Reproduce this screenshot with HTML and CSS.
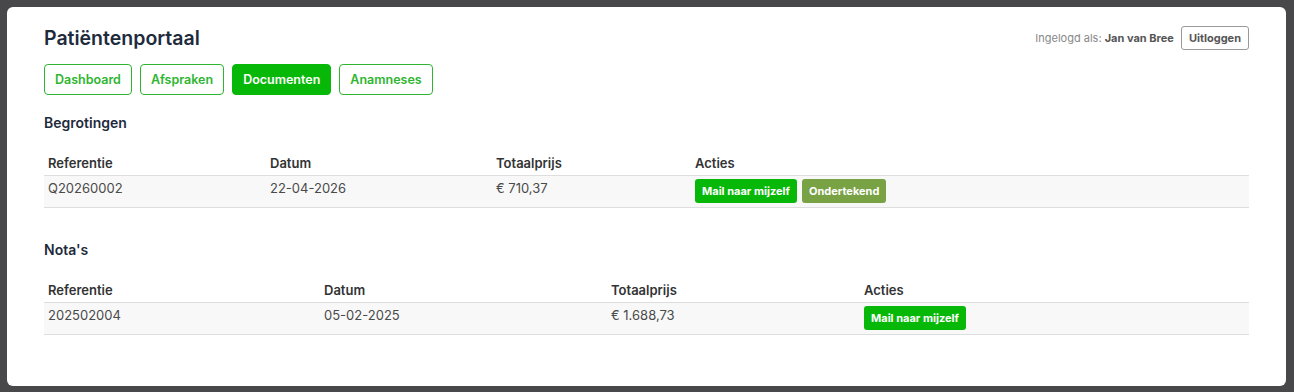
FILE: index.html
```html
<!DOCTYPE html>
<html lang="nl">
<head>
    <meta charset="UTF-8">
    <meta name="viewport" content="width=device-width, initial-scale=1.0">
    <title>Patiëntenportaal</title>
    <link rel="stylesheet" href="styles.css">
</head>
<body>
    <div class="container">
        <div class="header">
            <h1>Patiëntenportaal</h1>
            <div class="user-info">
                <span class="user-label">Ingelogd als: <strong>Jan van Bree</strong></span>
                <button class="logout-btn">Uitloggen</button>
            </div>
        </div>

        <nav class="nav">
            <a href="#" class="nav-link">Dashboard</a>
            <a href="#" class="nav-link">Afspraken</a>
            <a href="#" class="nav-link active">Documenten</a>
            <a href="#" class="nav-link">Anamneses</a>
        </nav>

        <h2>Begrotingen</h2>
        <table class="doc-table quotes">
            <thead>
                <tr>
                    <th class="col-ref">Referentie</th>
                    <th class="col-date">Datum</th>
                    <th class="col-price">Totaalprijs</th>
                    <th>Acties</th>
                </tr>
            </thead>
            <tbody>
                <tr>
                    <td>Q20260002</td>
                    <td>22-04-2026</td>
                    <td>€ 710,37</td>
                    <td>
                        <div class="actions">
                            <button class="btn btn-mail">Mail naar mijzelf</button>
                            <button class="btn btn-signed">Ondertekend</button>
                        </div>
                    </td>
                </tr>
            </tbody>
        </table>

        <h2 class="section-gap">Nota's</h2>
        <table class="doc-table invoices">
            <thead>
                <tr>
                    <th class="col-ref">Referentie</th>
                    <th class="col-date">Datum</th>
                    <th class="col-price">Totaalprijs</th>
                    <th>Acties</th>
                </tr>
            </thead>
            <tbody>
                <tr>
                    <td>202502004</td>
                    <td>05-02-2025</td>
                    <td>€ 1.688,73</td>
                    <td>
                        <div class="actions">
                            <button class="btn btn-mail">Mail naar mijzelf</button>
                        </div>
                    </td>
                </tr>
            </tbody>
        </table>
    </div>
</body>
</html>
```

FILE: styles.css
```css
body {
    font-family: 'Inter', 'Liberation Sans', sans-serif;
    background-color: #48484a;
    margin: 0;
    padding: 7px 8px 6px 7px;
}

.container {
    background-color: #fff;
    border-radius: 6px;
    padding: 19px 37px 0 37px;
    height: 379px;
    box-sizing: border-box;
}

.header {
    display: flex;
    justify-content: space-between;
    align-items: center;
}

h1 {
    margin: 0;
    font-size: 19.5px;
    line-height: 24px;
    font-weight: 600;
    color: #1e2b3c;
}

.user-info {
    display: flex;
    align-items: center;
    gap: 7px;
    font-size: 11px;
}

.user-label {
    color: #888;
}

.user-label strong {
    color: #555;
    font-weight: 700;
}

.logout-btn {
    font-family: inherit;
    font-size: 11px;
    font-weight: 700;
    color: #555;
    background: #fff;
    border: 1px solid #999;
    border-radius: 3px;
    height: 24px;
    padding: 0 7px;
}

.nav {
    display: flex;
    gap: 8px;
    margin-top: 14px;
}

.nav-link {
    display: block;
    font-size: 12.5px;
    line-height: 15px;
    font-weight: 600;
    color: #2fb52f;
    text-decoration: none;
    border: 1px solid #2fb52f;
    border-radius: 4px;
    padding: 7px 10px;
}

.nav-link.active {
    background-color: #08b808;
    border-color: #08b808;
    color: #fff;
}

h2 {
    margin: 18px 0 0 0;
    font-size: 14px;
    line-height: 20px;
    font-weight: 600;
    color: #1e2b3c;
}

h2.section-gap {
    margin-top: 32px;
}

.doc-table {
    width: 100%;
    border-collapse: collapse;
    margin-top: 18px;
    font-size: 13px;
}

.doc-table th {
    text-align: left;
    font-weight: 600;
    color: #333;
    padding: 3px 4px;
    height: 18px;
    line-height: 18px;
    border-bottom: 1px solid #dedede;
}

.doc-table td {
    vertical-align: top;
    color: #4a4a4a;
    background-color: #f8f8f8;
    padding: 3px 4px 3px 4px;
    height: 25px;
    line-height: 18px;
    border-bottom: 1px solid #dedede;
}

.quotes .col-ref { width: 214px; }
.quotes .col-date { width: 218px; }
.quotes .col-price { width: 191px; }

.invoices .col-ref { width: 268px; }
.invoices .col-date { width: 279px; }
.invoices .col-price { width: 245px; }

.actions {
    display: flex;
    gap: 5px;
}

.btn {
    font-family: inherit;
    font-size: 11px;
    font-weight: 700;
    color: #fff;
    border: none;
    border-radius: 3px;
    height: 24px;
    padding: 0 7px;
}

.btn-mail {
    background-color: #08b808;
}

.btn-signed {
    background-color: #79a244;
}
```
